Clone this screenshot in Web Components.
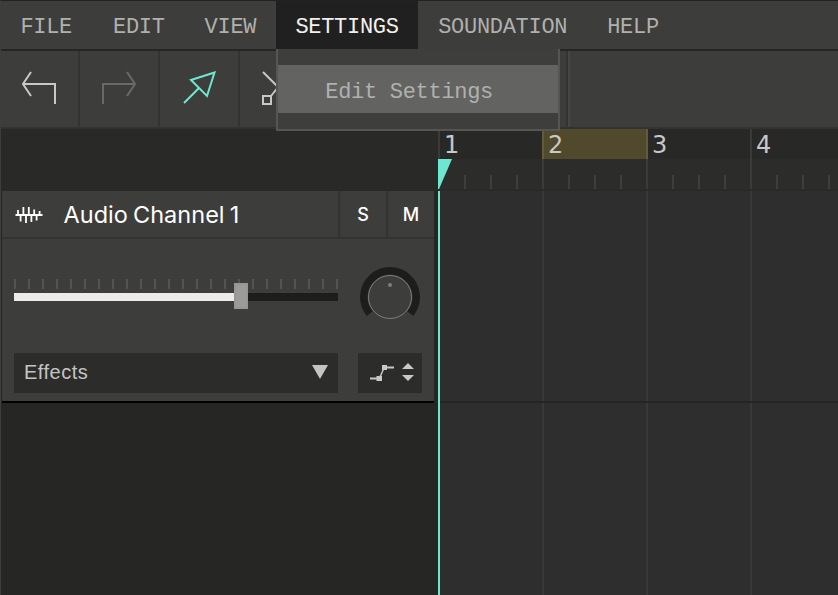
<!DOCTYPE html>
<html lang="en">
<head>
  <meta charset="UTF-8">
  <meta name="viewport" content="width=device-width, initial-scale=1.0">
  <title>Studio</title>
  <style>
    body {
      margin: 0;
      overflow: hidden;
      background: #262625;
    }
  </style>
</head>
<body>
  <studio-app>
    <menu-bar slot="menu">
      <menu-item>FILE</menu-item>
      <menu-item>EDIT</menu-item>
      <menu-item>VIEW</menu-item>
      <menu-item open>SETTINGS<menu-option slot="options">Edit Settings</menu-option></menu-item>
      <menu-item>SOUNDATION</menu-item>
      <menu-item>HELP</menu-item>
    </menu-bar>
    <tool-bar slot="tools"></tool-bar>
    <audio-track slot="tracks">Audio Channel 1</audio-track>
    <time-line slot="timeline"></time-line>
  </studio-app>

  <script>
    // Attach an open shadow root holding the given markup
    function render(element, html) {
      const shadowRoot = element.attachShadow({ mode: 'open' });
      shadowRoot.innerHTML = html;
      return shadowRoot;
    }

    customElements.define('studio-app', class extends HTMLElement {
      constructor() {
        super();
        render(this, `
          <style>
            :host {
              display: flex;
              flex-direction: column;
              box-sizing: border-box;
              width: 838px;
              height: 595px;
              border-top: 1px solid #222;
              border-left: 1px solid #3e3e3d;
              background: #262625;
              overflow: hidden;
            }
            main { flex: 1; display: flex; min-height: 0; }
            aside { width: 437px; flex: none; background: linear-gradient(#292928 62px, #262624 62px); }
            .tracks { width: 432px; margin: 62px 0 0 1px; }
          </style>
          <slot name="menu"></slot>
          <slot name="tools"></slot>
          <main>
            <aside><div class="tracks"><slot name="tracks"></slot></div></aside>
            <slot name="timeline"></slot>
          </main>
        `);
      }
    });

    customElements.define('menu-bar', class extends HTMLElement {
      constructor() {
        super();
        render(this, `
          <style>
            :host {
              display: flex;
              flex: none;
              height: 48px;
              background: #3d3d3b;
              border-bottom: 2px solid #252524;
              font: 22px/48px "Liberation Mono", monospace;
              color: #b0b0ae;
            }
          </style>
          <slot></slot>
        `);
      }
    });

    customElements.define('menu-item', class extends HTMLElement {
      constructor() {
        super();
        render(this, `
          <style>
            :host {
              display: block;
              position: relative;
              height: 48px;
              padding: 0 19.6px 0 20.4px;
              letter-spacing: -0.3px;
              white-space: nowrap;
            }
            :host(:first-of-type) { padding: 0 20.6px 0 19.4px; }
            .label { position: relative; top: 3px; }
            :host([open]) { background: #202020; color: #f0f0ee; padding: 0 19.2px 0 19.6px; }
            .options { display: none; }
            :host([open]) .options {
              display: block;
              position: absolute;
              z-index: 2;
              top: 48px;
              left: 0;
              width: 280px;
              padding: 16px 0;
              background: #3e3e3c;
              border: 2px solid #555553;
              border-top: 0;
            }
          </style>
          <span class="label"><slot></slot></span>
          <div class="options"><slot name="options"></slot></div>
        `);
      }
    });

    customElements.define('menu-option', class extends HTMLElement {
      constructor() {
        super();
        render(this, `
          <style>
            :host {
              display: block;
              box-sizing: border-box;
              height: 48px;
              padding: 4px 0 0 47.5px;
              background: #636361;
              color: #b0b0ae;
            }
          </style>
          <slot></slot>
        `);
      }
    });

    customElements.define('tool-bar', class extends HTMLElement {
      constructor() {
        super();
        render(this, `
          <style>
            :host {
              display: flex;
              flex: none;
              height: 76px;
              background: #3d3d3b;
              border-bottom: 2px solid #323231;
            }
            .tool { flex: none; width: 78px; border-right: 2px solid #333332; }
            .undo { width: 77px; }
            .rest { flex: none; width: 326px; border-right: 2px solid #333332; }
            .edge { width: 2px; background: #464645; }
            svg { display: block; width: 78px; height: 76px; fill: none; stroke: #c8c8c6; stroke-width: 2; }
            .off svg { stroke: #696967; }
            .on svg { stroke: #6ee7d0; }
          </style>
          <div class="tool undo"><svg viewBox="1 51 78 76"><path d="M55 104V84H23M31 72L23 84L31 96"/></svg></div>
          <div class="tool off"><svg viewBox="80 51 78 76"><path d="M103 104V84H135M127 72L135 84L127 96"/></svg></div>
          <div class="tool on"><svg viewBox="160 51 78 76"><path d="M184 103L198.500 88.500M214.500 72.500L191 80L207 96Z"/></svg></div>
          <div class="rest"><svg viewBox="240 51 78 76"><path d="M263 72L287 96M287 76L271 96M263 96h8v8h-8z"/></svg></div>
          <div class="edge"></div>
        `);
      }
    });

    customElements.define('audio-track', class extends HTMLElement {
      constructor() {
        super();
        render(this, `
          <style>
            :host {
              display: block;
              background: #3d3d3b;
              border-bottom: 2px solid #000;
              font-family: Inter, sans-serif;
              color: #fff;
            }
            header { display: flex; height: 46px; border-bottom: 2px solid #333332; }
            header svg { flex: none; width: 62px; height: 46px; }
            .name {
              width: 274px;
              text-indent: -0.5px;
              font-size: 23.5px;
              line-height: 48px;
              letter-spacing: 0.02px;
              word-spacing: -1.5px;
              white-space: nowrap;
            }
            .toggle {
              width: 46px;
              border-left: 2px solid #333332;
              font-size: 18px;
              font-weight: 500;
              line-height: 48px;
              text-align: center;
            }
            .controls {
              display: grid;
              grid-template-columns: 324px 64px;
              grid-template-rows: 114px 40px;
              column-gap: 20px;
              height: 162px;
              padding-left: 12px;
            }
            volume-slider { margin-top: 40px; }
            pan-knob { margin: 28px 0 0 2px; }
            .box { display: flex; align-items: center; justify-content: space-between; background: #2c2c2b; }
            .effects {
              padding: 0 10px;
              font: 20px/38px "Liberation Sans", sans-serif;
              letter-spacing: 0.5px;
              color: #c4c4c2;
            }
            .effects span { align-self: flex-start; }
            .effects svg { margin-bottom: 2px; }
          </style>
          <header>
            <svg viewBox="2 191 62 46" fill="none" stroke="#fff" stroke-width="1.8">
              <path d="M15.500 215H42.500M18 210V215M20.600 215V221.500M23.400 207V215M26 215V223M28.800 207V215M31.400 215V222M34.200 209.500V215M36.600 215V220.500M39.600 211V215"/>
            </svg>
            <div class="name"><slot></slot></div>
            <div class="toggle">S</div>
            <div class="toggle">M</div>
          </header>
          <div class="controls">
            <volume-slider></volume-slider>
            <pan-knob></pan-knob>
            <div class="box effects"><span>Effects</span>
              <svg width="16" height="14" fill="#c4c4c2"><path d="M0 0H16L8 14Z"/></svg>
            </div>
            <div class="box">
              <svg width="64" height="40" viewBox="358 353 64 40" fill="#c8c8c6">
                <path d="M370 377.500H376.500V376H382V381H376.500V379.500H370ZM382 365H387V366.500H394V368.500H387V370H382ZM402 369L408 363L414 369ZM402 375H414L408 381Z"/>
                <path d="M380 377L384 368" stroke="#c8c8c6" stroke-width="1.500"/>
              </svg>
            </div>
          </div>
        `);
      }
    });

    customElements.define('volume-slider', class extends HTMLElement {
      constructor() {
        super();
        render(this, `
          <style>
            :host { display: block; position: relative; height: 32px; }
            .ticks { height: 10px; background: repeating-linear-gradient(90deg, #545452 0 2px, transparent 2px 14px); }
            .rail { height: 8px; margin-top: 4px; background: linear-gradient(90deg, #ecebea 220px, #1d1d1c 220px); }
            .thumb {
              position: absolute;
              left: 220px;
              top: 4px;
              width: 14px;
              height: 26px;
              box-sizing: border-box;
              background: #9b9b99;
              border: 2px solid #969694;
            }
          </style>
          <div class="ticks"></div>
          <div class="rail"></div>
          <div class="thumb"></div>
        `);
      }
    });

    customElements.define('pan-knob', class extends HTMLElement {
      constructor() {
        super();
        render(this, `
          <style>
            :host { display: block; }
            svg { display: block; }
          </style>
          <svg width="60" height="60" fill="none">
            <path d="M9.700 46.600A26.200 26.200 0 1 1 50.300 46.600" stroke="#1d1d1c" stroke-width="7.500"/>
            <circle cx="30" cy="30" r="21.500" fill="#3d3d3b" stroke="#7d7d7b"/>
            <circle cx="30" cy="18" r="2" fill="#7d7d7b"/>
          </svg>
        `);
      }
    });

    customElements.define('time-line', class extends HTMLElement {
      constructor() {
        super();
        const bars = [1, 2, 3, 4].map((n) => `<div class="bar${n === 2 ? ' loop' : ''}">${n}</div>`).join('');
        render(this, `
          <style>
            :host { display: flex; flex-direction: column; flex: 1; position: relative; overflow: hidden; background: #2e2e2e; }
            .bars { display: flex; flex: none; height: 30px; background: #282827; }
            .bar {
              flex: none;
              box-sizing: border-box;
              width: 104px;
              border-left: 2px solid #3a3a39;
              padding-left: 4px;
              font: 24px/33px "DejaVu Sans", sans-serif;
              color: #c8c8c6;
            }
            .loop { background: #51492b; border-color: #64593a; width: 106px; margin-right: -2px; border-right: 2px solid #64593a; }
            .loop + .bar { border-color: transparent; }
            .beats {
              flex: none;
              height: 30px;
              background:
                repeating-linear-gradient(90deg, #3b3b3a 0 2px, transparent 2px 104px),
                repeating-linear-gradient(90deg, #3e3e3d 0 2px, transparent 2px 26px) 0 16px / 100% 14px no-repeat,
                #2c2c2b;
            }
            .lane {
              border-bottom: 2px solid #242424;
              height: 210px;
            }
            .grid {
              flex: 1;
              border-top: 2px solid #2a2a2a;
              background: repeating-linear-gradient(90deg, #383838 0 2px, transparent 2px 104px);
            }
            .marker { position: absolute; left: 0; top: 30px; display: block; }
            .playhead { position: absolute; left: 0; top: 62px; bottom: 0; width: 2px; background: #6ee7d0; }
          </style>
          <div class="bars">${bars}</div>
          <div class="beats"></div>
          <div class="grid"><div class="lane"></div></div>
          <svg class="marker" width="14" height="31"><path d="M0 0H14L1 30H0Z" fill="#6ee7d0"/></svg>
          <div class="playhead"></div>
        `);
      }
    });
  </script>
</body>
</html>
